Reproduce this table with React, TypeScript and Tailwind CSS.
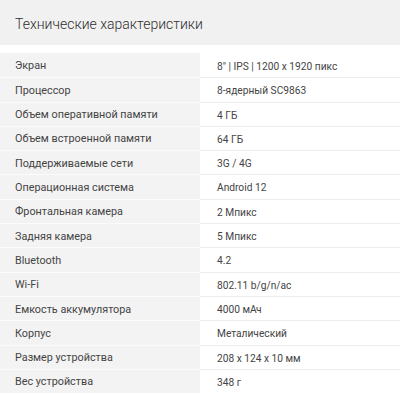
import React from 'react';

const specs: [string, string][] = [
  ['Экран', '8" | IPS | 1200 x 1920 пикс'],
  ['Процессор', '8-ядерный SC9863'],
  ['Объем оперативной памяти', '4 ГБ'],
  ['Объем встроенной памяти', '64 ГБ'],
  ['Поддерживаемые сети', '3G / 4G'],
  ['Операционная система', 'Android 12'],
  ['Фронтальная камера', '2 Мпикс'],
  ['Задняя камера', '5 Мпикс'],
  ['Bluetooth', '4.2'],
  ['Wi-Fi', '802.11 b/g/n/ac'],
  ['Емкость аккумулятора', '4000 мАч'],
  ['Корпус', 'Металический'],
  ['Размер устройства', '208 x 124 x 10 мм'],
  ['Вес устройства', '348 г'],
];

export default function App() {
  return (
    <div className="w-[400px] h-[395px] bg-white overflow-hidden font-['Roboto',sans-serif] text-[#444]">
      <div className="h-[45px] bg-[#f2f1f1] flex items-center px-[15px] pt-[3px]">
        <h2 className="text-[14px] font-light text-[#2e2e2e]">Технические характеристики</h2>
      </div>
      <div className="mt-[8px]">
        {specs.map(([name, value], i) => (
          <div key={name} className="flex h-[24.3px]">
            <div
              className={`w-[200px] bg-[#f3f3f3] flex items-center px-[15px] pt-[2px] text-[10.8px] ${i > 0 ? 'border-t border-[#fbfbfb]' : ''}`}
            >
              {name}
            </div>
            <div className={`flex-1 flex items-center px-[17px] pt-[2px] text-[10.2px] ${i > 0 ? 'border-t border-[#ececec]' : ''}`}>
              {value}
            </div>
          </div>
        ))}
      </div>
    </div>
  );
}
